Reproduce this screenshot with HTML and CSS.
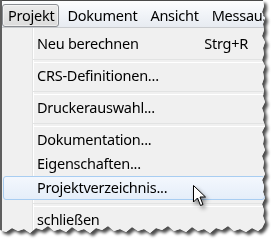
FILE: index.html
```html
<!DOCTYPE html>
<html lang="de">
<head>
  <meta charset="UTF-8">
  <title>Projekt-Menü</title>
  <link rel="stylesheet" href="styles.css">
</head>
<body>
  <div class="frame">
    <div class="sheet">
      <div class="menubar">
        <span class="top-item open">Projekt</span>
        <span class="top-item">Dokument</span>
        <span class="top-item">Ansicht</span>
        <span class="top-item">Messausgabe</span>
      </div>
      <div class="menu">
        <div class="item"><span>Neu berechnen</span><span class="key">Strg+R</span></div>
        <div class="sep"></div>
        <div class="item"><span>CRS-Definitionen...</span></div>
        <div class="sep"></div>
        <div class="item"><span>Druckerauswahl...</span></div>
        <div class="sep"></div>
        <div class="item"><span>Dokumentation...</span></div>
        <div class="item"><span>Eigenschaften...</span></div>
        <div class="item hover"><span>Projektverzeichnis...</span></div>
        <div class="sep"></div>
        <div class="item"><span>schließen</span></div>
      </div>
    </div>
  </div>

  <!-- Mauszeiger liegt über dem Menü -->
  <svg class="cursor" width="14" height="22" viewBox="0 0 14 22">
    <path d="M0.5 0.5 L0.5 17 L4.5 13 L7.5 20.5 L10 19.5 L7 12 L12.5 12 Z" fill="#fff" stroke="#000" stroke-width="1" stroke-linejoin="round"/>
  </svg>
</body>
</html>
```

FILE: styles.css
```css
* {
  margin: 0;
  padding: 0;
  box-sizing: border-box;
}

body {
  background: #fff;
  font-family: "Noto Sans", "Open Sans", sans-serif;
  font-size: 14.5px;
  letter-spacing: -0.25px;
  color: #000;
  position: relative;
  width: 277px;
  height: 241px;
  overflow: hidden;
}

.frame {
  width: 270px;
  filter: drop-shadow(3px 3px 1.5px rgba(0, 0, 0, 0.7));
}

.sheet {
  width: 266px;
  height: 234px;
  border-left: 2px solid #5e5e5e;
  background: #f0f0f0;
  clip-path: polygon(0 0, 263px 0, 264px 6px, 262px 12px, 265px 18px, 263px 24px, 264px 30px, 262px 36px, 265px 42px, 263px 48px, 264px 54px, 262px 60px, 265px 66px, 263px 72px, 264px 78px, 262px 84px, 264px 90px, 263px 96px, 265px 102px, 262px 108px, 264px 114px, 263px 120px, 265px 126px, 262px 132px, 264px 138px, 263px 144px, 265px 150px, 262px 156px, 264px 162px, 263px 168px, 265px 174px, 262px 180px, 264px 186px, 263px 192px, 265px 198px, 262px 204px, 264px 210px, 263px 216px, 265px 222px, 262px 228px, 258px 231px, 252px 228px, 246px 232px, 240px 229px, 234px 231px, 228px 226px, 222px 230px, 216px 228px, 210px 233px, 204px 229px, 198px 231px, 192px 227px, 186px 232px, 180px 229px, 174px 231px, 168px 226px, 162px 230px, 156px 228px, 150px 233px, 144px 229px, 138px 231px, 132px 227px, 126px 232px, 120px 229px, 114px 231px, 108px 226px, 102px 230px, 96px 228px, 90px 233px, 84px 229px, 78px 231px, 72px 227px, 66px 232px, 60px 229px, 54px 231px, 48px 226px, 42px 230px, 36px 228px, 30px 233px, 24px 229px, 18px 231px, 12px 228px, 6px 232px, 0 230px);
}

.menubar {
  display: flex;
  height: 27px;
  padding-top: 3px;
  border-top: 1px solid #4a4a4a;
  background: linear-gradient(#fcfdfe, #f1f4f8 50%, #e7ebf1);
  white-space: nowrap;
  overflow: hidden;
}

.top-item {
  height: 23px;
  line-height: 21px;
  padding: 0 4px 0 5px;
  margin-right: 2px;
  border: 1px solid transparent;
  border-radius: 3px;
}

.top-item.open {
  border-color: #8b8e93;
  background: linear-gradient(#ebebeb, #dcdcdc);
  box-shadow: inset 0 0 0 1px rgba(255, 255, 255, 0.5);
}

.menu {
  height: 207px;
  padding-top: 4px;
  border-top: 1px solid #c9cbce;
  background: linear-gradient(to right, #f0f0f0 30px, #e2e3e3 30px, #e2e3e3 31px, #fff 31px, #fff 32px, #f0f0f0 32px);
}

.item {
  display: flex;
  justify-content: space-between;
  height: 24px;
  line-height: 23px;
  padding: 0 18px 0 35px;
}

.item.hover {
  margin: 0 1px;
  padding: 0 17px 0 33px;
  border: 1px solid #a8cdf1;
  border-radius: 3px;
  line-height: 21px;
  background: linear-gradient(#f3f7fd, #e5eef9);
}

.sep {
  height: 8px;
  margin-left: 31px;
  padding-top: 3px;
}

.sep::before {
  content: "";
  display: block;
  height: 2px;
  border-top: 1px solid #e2e3e3;
  border-bottom: 1px solid #fff;
}

.cursor {
  position: absolute;
  left: 193px;
  top: 185px;
  filter: drop-shadow(2px 3px 2px rgba(0, 0, 0, 0.45));
}
```
